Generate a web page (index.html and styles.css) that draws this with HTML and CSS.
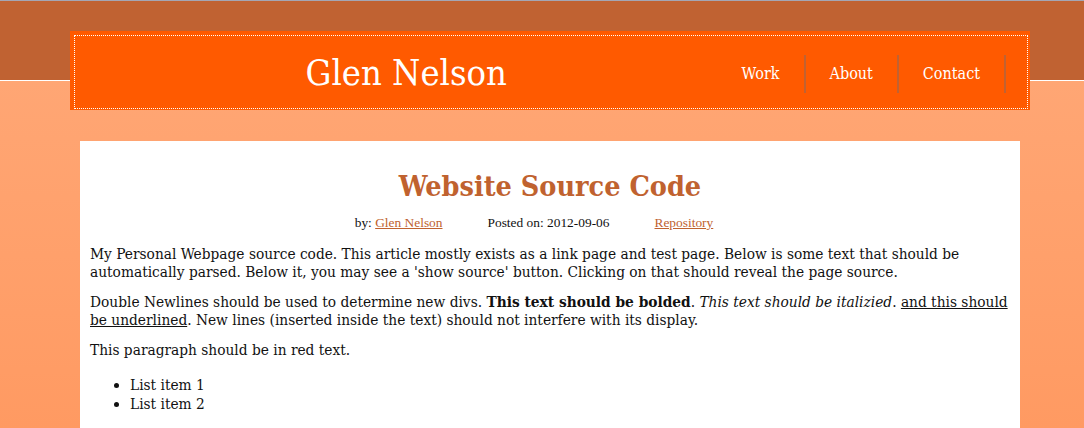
FILE: index.html
```html
<!DOCTYPE html>
<html>
<head>
<meta charset="utf-8">
<title>Glen Nelson - Website Source Code</title>
<link rel="stylesheet" href="styles.css">
</head>
<body>
<div class="site">
  <header class="bar">
    <div class="bar-inner">
      <div class="brand">Glen Nelson</div>
      <nav class="nav">
        <a class="nav-item" href="#">Work</a>
        <a class="nav-item" href="#">About</a>
        <a class="nav-item" href="#">Contact</a>
      </nav>
    </div>
  </header>
  <main class="content">
    <h1 class="title">Website Source Code</h1>
    <div class="meta">
      <span>by: <a href="#">Glen Nelson</a></span>
      <span>Posted on: 2012-09-06</span>
      <span><a href="#">Repository</a></span>
    </div>
    <p>My Personal Webpage source code. This article mostly exists as a link page and test page. Below is some text that should be automatically parsed. Below it, you may see a 'show source' button. Clicking on that should reveal the page source.</p>
    <p>Double Newlines should be used to determine new divs. <b>This text should be bolded</b>. <i>This text should be italizied</i>. <u>and this should be underlined</u>. New lines (inserted inside the text) should not interfere with its display.</p>
    <p>This paragraph should be in red text.</p>
    <ul class="list">
      <li>List item 1</li>
      <li>List item 2</li>
    </ul>
  </main>
</div>
</body>
</html>
```

FILE: styles.css
```css
html, body {
  margin: 0;
  padding: 0;
}
body {
  height: 428px;
  overflow: hidden;
  background:
    linear-gradient(#a4a6b4, #a4a6b4) 0 0 / 100% 1px no-repeat,
    repeating-linear-gradient(to right, #ffffff 0 1px, transparent 1px 2px) 0 80px / 100% 1px no-repeat,
    linear-gradient(#c06232, #c06232) 0 0 / 100% 80px no-repeat,
    linear-gradient(to bottom, #ffa674 0, #ff9a62 100%) 0 81px / 100% 347px no-repeat;
  font-family: "DejaVu Serif Condensed", "DejaVu Serif", serif;
  color: #111;
}
.site {
  width: 960px;
  margin-left: 70px;
  padding-top: 31px;
}
.bar {
  background: #ff5a00;
  padding: 4px 2px 1px 4px;
}
.bar-inner {
  border: 1px dotted #ffffff;
  height: 72px;
  display: flex;
  align-items: center;
}
.brand {
  flex: 1;
  padding-left: 20px;
  text-align: center;
  color: #fff;
  font-size: 36px;
  line-height: 40px;
  padding-top: 2px;
}
.nav {
  flex-shrink: 0;
  display: flex;
  padding-right: 21px;
  padding-top: 4px;
}
.nav-item {
  color: #fff;
  text-decoration: none;
  font-size: 16px;
  line-height: 38px;
  padding: 0 24px;
  border-right: 2px solid #c06232;
}
.content {
  box-sizing: border-box;
  background: #fff;
  margin: 31px 10px 0;
  padding: 22px 10px 0;
  height: 287px;
}
.title {
  margin: 0;
  text-align: center;
  color: #c0622f;
  font-size: 28.5px;
  line-height: 46px;
  font-weight: bold;
}
.meta {
  display: flex;
  justify-content: center;
  gap: 45px;
  margin: 6px 32px 14px 0;
  font-family: "Liberation Serif", serif;
  font-size: 13.4px;
  line-height: 16px;
}
.meta a {
  color: #c0622f;
}
.content p {
  margin: 0 0 12px;
  font-size: 15.3px;
  line-height: 18px;
}
.list {
  margin: 17px 0 0;
  padding-left: 40px;
  font-size: 15.3px;
  line-height: 19px;
}
```
